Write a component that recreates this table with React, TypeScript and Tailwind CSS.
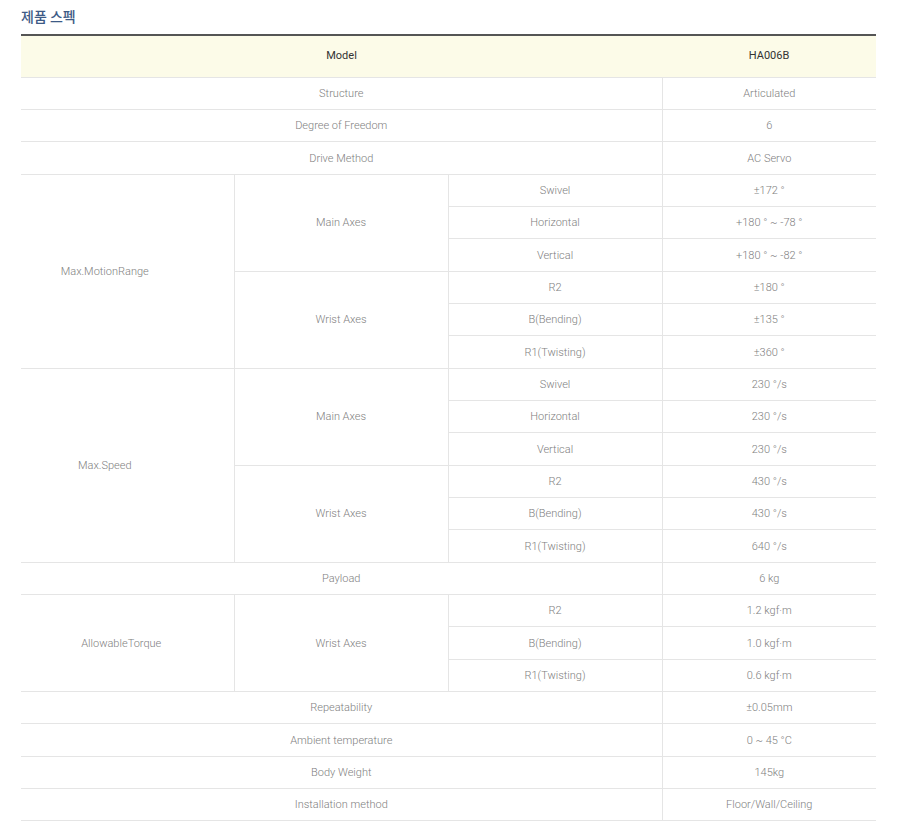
const cell = "border border-[#e5e5e5] text-center align-middle h-[32.35px] p-0 pt-[2px]";

type Cell = { text: string; rowSpan?: number; colSpan?: number; pad?: string };
type Row = { cells: Cell[] };

const rows: Row[] = [
  { cells: [{ text: "Structure", colSpan: 3 }, { text: "Articulated" }] },
  { cells: [{ text: "Degree of Freedom", colSpan: 3 }, { text: "6" }] },
  { cells: [{ text: "Drive Method", colSpan: 3 }, { text: "AC Servo" }] },
  {
    cells: [
      { text: "Max.MotionRange", rowSpan: 6, pad: "pr-[45px]" },
      { text: "Main Axes", rowSpan: 3 },
      { text: "Swivel" },
      { text: "±172 °" },
    ],
  },
  { cells: [{ text: "Horizontal" }, { text: "+180 ° ~ -78 °" }] },
  { cells: [{ text: "Vertical" }, { text: "+180 ° ~ -82 °" }] },
  { cells: [{ text: "Wrist Axes", rowSpan: 3 }, { text: "R2" }, { text: "±180 °" }] },
  { cells: [{ text: "B(Bending)" }, { text: "±135 °" }] },
  { cells: [{ text: "R1(Twisting)" }, { text: "±360 °" }] },
  {
    cells: [
      { text: "Max.Speed", rowSpan: 6, pad: "pr-[45px]" },
      { text: "Main Axes", rowSpan: 3 },
      { text: "Swivel" },
      { text: "230 °/s" },
    ],
  },
  { cells: [{ text: "Horizontal" }, { text: "230 °/s" }] },
  { cells: [{ text: "Vertical" }, { text: "230 °/s" }] },
  { cells: [{ text: "Wrist Axes", rowSpan: 3 }, { text: "R2" }, { text: "430 °/s" }] },
  { cells: [{ text: "B(Bending)" }, { text: "430 °/s" }] },
  { cells: [{ text: "R1(Twisting)" }, { text: "640 °/s" }] },
  { cells: [{ text: "Payload", colSpan: 3 }, { text: "6 kg" }] },
  {
    cells: [
      { text: "AllowableTorque", rowSpan: 3, pad: "pr-[12px]" },
      { text: "Wrist Axes", rowSpan: 3 },
      { text: "R2" },
      { text: "1.2 kgf·m" },
    ],
  },
  { cells: [{ text: "B(Bending)" }, { text: "1.0 kgf·m" }] },
  { cells: [{ text: "R1(Twisting)" }, { text: "0.6 kgf·m" }] },
  { cells: [{ text: "Repeatability", colSpan: 3 }, { text: "±0.05mm" }] },
  { cells: [{ text: "Ambient temperature", colSpan: 3 }, { text: "0 ~ 45 °C" }] },
  { cells: [{ text: "Body Weight", colSpan: 3 }, { text: "145kg" }] },
  { cells: [{ text: "Installation method", colSpan: 3 }, { text: "Floor/Wall/Ceiling" }] },
];

export default function App() {
  return (
    <div className="w-[900px] h-[838px] bg-white pl-[21px] pt-[6px] font-['Roboto','Noto_Sans_CJK_KR',sans-serif]">
      <h2 className="text-[14px] leading-[20px] text-[#3d5a86] font-['Noto_Sans_CJK_KR',sans-serif] font-medium">
        제품 스펙
      </h2>
      <table className="mt-[8px] w-[855px] border-collapse table-fixed border-t-2 border-t-[#555] text-[11px] text-[#808080] font-light">
        <colgroup>
          <col className="w-[213px]" />
          <col className="w-[214px]" />
          <col className="w-[214px]" />
          <col className="w-[214px]" />
        </colgroup>
        <thead>
          <tr className="bg-[#fcfbe8]">
            <th colSpan={3} className="h-[42px] font-normal text-[#333] border-b border-[#e5e5e5] border-x-0 border-t-2 border-t-[#555]">
              Model
            </th>
            <th className="h-[42px] font-normal text-[#333] border-b border-[#e5e5e5] border-t-2 border-t-[#555]">
              HA006B
            </th>
          </tr>
        </thead>
        <tbody>
          {rows.map((r, i) => (
            <tr key={i}>
              {r.cells.map((c, j) => (
                <td
                  key={j}
                  rowSpan={c.rowSpan}
                  colSpan={c.colSpan}
                  className={`${cell} ${c.pad ?? ""} ${j === 0 && (c.colSpan || c.rowSpan || r.cells.length === 4) ? "border-l-0" : ""} ${j === r.cells.length - 1 ? "border-r-0" : ""}`}
                >
                  {c.text}
                </td>
              ))}
            </tr>
          ))}
        </tbody>
      </table>
    </div>
  );
}
